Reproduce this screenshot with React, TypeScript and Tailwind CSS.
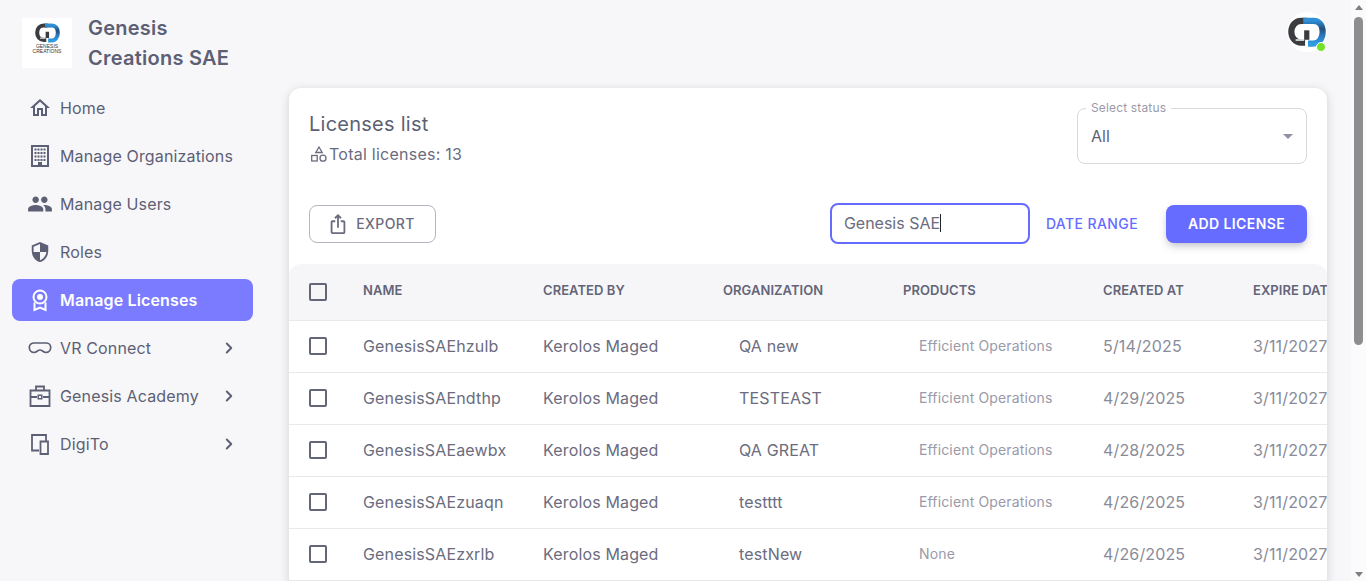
import { ChevronRight } from 'lucide-react';
import { MdOutlineHome, MdPeople, MdSecurity, MdOutlineIosShare } from 'react-icons/md';
import type { ReactNode } from 'react';

const BuildingIcon = () => (
  <svg width="24" height="24" viewBox="0 0 24 24" fill="#5d5f75">
    <path fillRule="evenodd" d="M3 1h18v22H3zM5 3v18h14V3z" />
    <path d="M6.500 4.500h2v2h-2zM9.500 4.500h2v2h-2zM12.500 4.500h2v2h-2zM15.500 4.500h2v2h-2zM6.500 8h2v2h-2zM9.500 8h2v2h-2zM12.500 8h2v2h-2zM15.500 8h2v2h-2zM6.500 11.500h2v2h-2zM9.500 11.500h2v2h-2zM12.500 11.500h2v2h-2zM15.500 11.500h2v2h-2zM6.500 15h2v2h-2zM9.500 15h2v2h-2zM12.500 15h2v2h-2zM15.500 15h2v2h-2zM10 18h4v3h-4z" />
  </svg>
);

const MedalIcon = () => (
  <svg width="24" height="24" viewBox="0 0 24 24" fill="none" stroke="#fff" strokeWidth="2">
    <circle cx="12" cy="9" r="6.500" />
    <circle cx="12" cy="9" r="3" fill="#fff" stroke="none" />
    <path d="M6.500 14.500V22l5.500-2.500 5.500 2.500v-7.500" />
  </svg>
);

const VrIcon = () => (
  <svg width="24" height="24" viewBox="0 0 24 24" fill="none" stroke="#5d5f75" strokeWidth="1.700">
    <path d="M6 7h12c2.500 0 4.700 1.800 4.700 4.300 0 2.800-2 5.200-4.700 5.200-2.800 0-3.500-2.500-6-2.500s-3.200 2.500-6 2.500c-2.700 0-4.700-2.400-4.700-5.200C1.300 8.800 3.500 7 6 7z" />
  </svg>
);

const ToolboxIcon = () => (
  <svg width="24" height="24" viewBox="0 0 24 24" fill="none" stroke="#5d5f75" strokeWidth="1.800">
    <path d="M2.500 6.500h19v15.500h-19z" />
    <path d="M8 6.500V2.500h8v4" />
    <path d="M2.500 13h6.500M15 13h6.500" />
    <path d="M9.500 10.500h5v5h-5z" fill="#5d5f75" stroke="none" />
    <path d="M11 12h2v2h-2z" fill="#f7f7f9" stroke="none" />
  </svg>
);

const DevicesIcon = () => (
  <svg width="24" height="24" viewBox="0 0 24 24" fill="none" stroke="#5d5f75" strokeWidth="1.800">
    <path d="M11 18.500H4V3h14v6" />
    <path d="M12.500 9.500h7.500v12.500h-7.500z" />
  </svg>
);

const ShapesIcon = () => (
  <svg width="20" height="20" viewBox="0 0 20 20" fill="none" stroke="#6b6c7e" strokeWidth="1.300">
    <path d="M10 3l3.200 5.500H6.800z" />
    <rect x="2.700" y="11.500" width="5.500" height="5.500" />
    <circle cx="14" cy="14.200" r="3" />
  </svg>
);

const Logo = ({ size, id }: { size: number; id: string }) => (
  <svg width={size} height={size * 0.8} viewBox="0 0 40 32" fill="none">
    <defs>
      <linearGradient id={id} x1="0" y1="0" x2="0" y2="1">
        <stop offset="0" stopColor="#2f8fd8" />
        <stop offset="0.35" stopColor="#24507f" />
        <stop offset="0.7" stopColor="#2c7fc4" />
        <stop offset="1" stopColor="#2f9be0" />
      </linearGradient>
    </defs>
    <path d="M20 4H14C7.500 4 3.500 9.500 3.500 15.500S7.500 27 14 27h4" stroke="#3a3c40" strokeWidth="6.500" />
    <path d="M16 4h11c6 0 9.500 5 9.500 11.500S33 28 26.500 28H21" stroke={`url(#${id})`} strokeWidth="6.500" />
    <path d="M17 14h5.500v10H17z" fill="#3a3c40" />
    <path d="M8 23.500h9v1.500H8z" fill="#fff" />
  </svg>
);

interface NavEntry {
  label: string;
  icon: ReactNode;
  active?: boolean;
  more?: boolean;
}

const navItems: NavEntry[] = [
  { label: 'Home', icon: <MdOutlineHome size={24} color="#5d5f75" /> },
  { label: 'Manage Organizations', icon: <BuildingIcon /> },
  { label: 'Manage Users', icon: <MdPeople size={26} color="#5d5f75" /> },
  { label: 'Roles', icon: <MdSecurity size={22} color="#5d5f75" /> },
  { label: 'Manage Licenses', icon: <MedalIcon />, active: true },
  { label: 'VR Connect', icon: <VrIcon />, more: true },
  { label: 'Genesis Academy', icon: <ToolboxIcon />, more: true },
  { label: 'DigiTo', icon: <DevicesIcon />, more: true },
];

const rows = [
  { name: 'GenesisSAEhzulb', org: 'QA new', product: 'Efficient Operations', created: '5/14/2025' },
  { name: 'GenesisSAEndthp', org: 'TESTEAST', product: 'Efficient Operations', created: '4/29/2025' },
  { name: 'GenesisSAEaewbx', org: 'QA GREAT', product: 'Efficient Operations', created: '4/28/2025' },
  { name: 'GenesisSAEzuaqn', org: 'testttt', product: 'Efficient Operations', created: '4/26/2025' },
  { name: 'GenesisSAEzxrlb', org: 'testNew', product: 'None', created: '4/26/2025' },
];

const Checkbox = () => <span className="block h-[18px] w-[18px] rounded-[2px] border-2 border-[#636578]" />;

export default function App() {
  return (
    <div className="flex h-[581px] w-[1366px] overflow-hidden bg-[#f7f7f9] font-['Inter','Liberation_Sans',sans-serif] text-[#5d5f75]">
      <aside className="w-[289px] shrink-0 pl-[12px]">
        <div className="flex pl-[10px] pt-[13px]">
          <div className="mt-[5px] flex h-[50px] w-[50px] flex-col items-center bg-white pt-[5px]">
            <Logo size={25} id="logo-small" />
            <span className="mt-[1px] text-center font-['Liberation_Sans',sans-serif] text-[5px] leading-[5px] text-[#333]">GENESIS<br />CREATIONS</span>
          </div>
          <h1 className="ml-[16px] w-[170px] text-[20px] font-semibold leading-[30px] tracking-[0.25px]">Genesis Creations SAE</h1>
        </div>
        <nav className="mt-[14px] flex w-[241px] flex-col gap-[6px]">
          {navItems.map((item) => (
            <div
              key={item.label}
              className={`flex h-[42px] items-center rounded-lg pr-[15px] text-[16px] tracking-[0.15px] ${item.active ? 'bg-[#7a7bff] font-semibold text-white' : ''}`}
            >
              <span className="flex w-[48px] shrink-0 items-center justify-center pl-[8px]">{item.icon}</span>
              <span className="flex-1 whitespace-nowrap">{item.label}</span>
              {item.more && <ChevronRight size={18} strokeWidth={2.500} />}
            </div>
          ))}
        </nav>
      </aside>

      <main className="w-[1038px] shrink-0">
        <div className="flex h-[88px] justify-end pt-[12px]">
          <div className="relative flex h-[40px] w-[40px] items-center justify-center rounded-full bg-white">
            <Logo size={38} id="logo-avatar" />
            <span className="absolute bottom-[0px] right-[1px] h-[10px] w-[10px] rounded-full border border-white bg-[#72e128]" />
          </div>
        </div>

        <section className="h-[600px] overflow-hidden rounded-xl bg-white shadow-[0_2px_10px_rgba(76,78,100,0.22)]">
          <div className="flex justify-between px-[20px] pt-[20px]">
            <div>
              <h2 className="text-[20px] leading-[32px] tracking-[0.25px]">Licenses list</h2>
              <p className="mt-[2px] flex items-center text-[16px] leading-[24px] tracking-[0.25px] text-[#6b6c7e]">
                <ShapesIcon />
                Total licenses: 13
              </p>
            </div>
            <div className="relative flex h-[56px] w-[230px] items-center justify-between rounded-lg border border-[#d8d8dd] px-[13px]">
              <span className="absolute -top-[8px] left-[8px] bg-white px-[5px] text-[12px] leading-[14px] tracking-[0.15px] text-[#9a9aa8]">Select status</span>
              <span className="text-[16px]">All</span>
              <span className="h-0 w-0 border-x-[5px] border-t-[5px] border-x-transparent border-t-[#8f90a0]" />
            </div>
          </div>

          <div className="mt-[37px] flex items-center px-[20px]">
            <button className="flex h-[38px] w-[127px] items-center justify-center gap-[7px] rounded-lg border border-[#b4b5c0] pr-[3px] text-[14px] font-medium tracking-[0.4px] text-[#6b6c7e]">
              <MdOutlineIosShare size={22} />
              EXPORT
            </button>
            <div className="ml-auto flex h-[41px] w-[200px] items-center rounded-lg border-2 border-[#666cff] px-[12px] pb-[2px] text-[16px] text-[#6b6c7e]">
              Genesis SAE
              <span className="h-[18px] w-px bg-[#222]" />
            </div>
            <button className="ml-[16px] text-[14px] font-medium tracking-[0.4px] text-[#666cff]">DATE RANGE</button>
            <button className="ml-[28px] h-[38px] w-[141px] rounded-lg bg-[#666cff] text-[14px] font-semibold tracking-[0.4px] text-white shadow-[0_4px_8px_-2px_rgba(76,78,100,0.42)]">ADD LICENSE</button>
          </div>

          <div className="mt-[20px]">
            <div className="flex h-[57px] items-center rounded-t-xl border-b border-[#e9e9ec] bg-[#f6f6f9] pb-[2px] text-[13px] font-semibold tracking-[0.05px] text-[#636578]">
              <span className="flex w-[74px] shrink-0 pl-[20px] pt-[2px]"><Checkbox /></span>
              <span className="w-[180px] shrink-0">NAME</span>
              <span className="w-[180px] shrink-0">CREATED BY</span>
              <span className="w-[180px] shrink-0">ORGANIZATION</span>
              <span className="w-[200px] shrink-0">PRODUCTS</span>
              <span className="w-[150px] shrink-0">CREATED AT</span>
              <span className="shrink-0 whitespace-nowrap">EXPIRE DATE</span>
            </div>
            {rows.map((row) => (
              <div key={row.name} className="flex h-[52px] items-center border-b border-[#e9e9ec] pb-[2px] text-[16px] tracking-[0.15px] text-[#6b6c7e]">
                <span className="flex w-[74px] shrink-0 pl-[20px]"><Checkbox /></span>
                <span className="w-[180px] shrink-0">{row.name}</span>
                <span className="w-[180px] shrink-0">Kerolos Maged</span>
                <span className="w-[180px] shrink-0 pl-[16px]">{row.org}</span>
                <span className="w-[200px] shrink-0 pl-[16px] text-[14px] text-[#9a9aa8]">{row.product}</span>
                <span className="w-[150px] shrink-0 text-[#8a8b99]">{row.created}</span>
                <span className="shrink-0 whitespace-nowrap text-[#8a8b99]">3/11/2027</span>
              </div>
            ))}
          </div>
        </section>
      </main>

      <div className="ml-[24px] flex w-[15px] shrink-0 flex-col items-center bg-[#fbfbfb] px-[2px]">
        <span className="mt-[5px] h-0 w-0 border-x-[4px] border-b-[5px] border-x-transparent border-b-[#7f7f7f]" />
        <span className="mt-[7px] h-[328px] w-[9px] rounded-[5px] bg-[#8e8e8e]" />
        <span className="mt-auto mb-[4px] h-0 w-0 border-x-[4px] border-t-[5px] border-x-transparent border-t-[#7f7f7f]" />
      </div>
    </div>
  );
}
